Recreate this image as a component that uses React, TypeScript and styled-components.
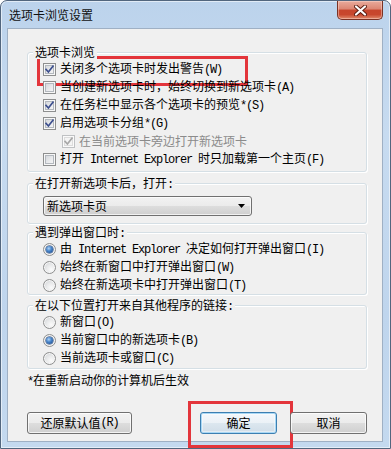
import styled, { createGlobalStyle, css } from "styled-components";

const GlobalStyle = createGlobalStyle`
  html, body {
    margin: 0;
    padding: 0;
    background: #ffffff;
  }
  body {
    font-family: "Noto Sans CJK SC", "Liberation Sans", sans-serif;
    font-size: 12px;
    color: #000;
  }
  * {
    box-sizing: border-box;
  }
`;

const checkOptions = [
  { text: "关闭多个选项卡时发出警告(W)", checked: true, marked: true },
  { text: "当创建新选项卡时，始终切换到新选项卡(A)", checked: false },
  { text: "在任务栏中显示各个选项卡的预览*(S)", checked: true },
  { text: "启用选项卡分组*(G)", checked: true },
  { text: "在当前选项卡旁边打开新选项卡", checked: true, disabled: true, indent: true },
  { text: "打开 Internet Explorer 时只加载第一个主页(F)", checked: false },
];

const popupOptions = [
  { text: "由 Internet Explorer 决定如何打开弹出窗口(I)", checked: true },
  { text: "始终在新窗口中打开弹出窗口(W)", checked: false },
  { text: "始终在新选项卡中打开弹出窗口(T)", checked: false },
];

const linkOptions = [
  { text: "新窗口(O)", checked: false },
  { text: "当前窗口中的新选项卡(B)", checked: true },
  { text: "当前选项卡或窗口(C)", checked: false },
];

// ascii runs get the half-width mono face, like SimSun does
const mix = (text: string) =>
  text
    .split(/([\x20-\x7e]+)/)
    .filter(Boolean)
    .map((part, i) =>
      /^[\x20-\x7e]+$/.test(part) ? <Latin key={i}>{part}</Latin> : <span key={i}>{part}</span>
    );

const CheckMark = ({ color }: { color: string }) => (
  <svg width="9" height="9" viewBox="0 0 9 9">
    <path d="M1 4.4 L3.4 7 L8 1.2" fill="none" stroke={color} strokeWidth="1.7" strokeLinecap="square" />
  </svg>
);

const CloseGlyph = () => (
  <svg width="13" height="11" viewBox="0 0 13 11">
    <path d="M2 1.5 L11 9.5 M11 1.5 L2 9.5" stroke="#5a1c10" strokeWidth="4" strokeLinecap="round" />
    <path d="M2 1.5 L11 9.5 M11 1.5 L2 9.5" stroke="#ffffff" strokeWidth="2.2" strokeLinecap="round" />
  </svg>
);

const ArrowDown = () => (
  <svg width="7" height="4" viewBox="0 0 7 4">
    <path d="M0 0 H7 L3.5 4 Z" fill="#000" />
  </svg>
);

const App = () => {
  return (
    <>
      <GlobalStyle />
      <Window>
        <TitleBar>
          <Title>选项卡浏览设置</Title>
          <CloseButton>
            <CloseGlyph />
          </CloseButton>
        </TitleBar>
        <Client>
          <Group>
            <Caption>选项卡浏览</Caption>
            <Frame $pt={7} $pb={3}>
              {checkOptions.map((opt) => (
                <Row key={opt.text} $indent={opt.indent} $marked={opt.marked} $disabled={opt.disabled}>
                  <CheckBox $disabled={opt.disabled}>
                    {opt.checked && <CheckMark color={opt.disabled ? "#a7a7a7" : "#3d4f8e"} />}
                  </CheckBox>
                  <RowText>{mix(opt.text)}</RowText>
                </Row>
              ))}
            </Frame>
          </Group>

          <Group $mt={4}>
            <Caption>{mix("在打开新选项卡后，打开:")}</Caption>
            <Frame $pt={12} $pb={7}>
              <Dropdown>
                <span>新选项卡页</span>
                <ArrowDown />
              </Dropdown>
            </Frame>
          </Group>

          <Group $mt={1}>
            <Caption>{mix("遇到弹出窗口时:")}</Caption>
            <Frame $pt={7} $pb={0}>
              {popupOptions.map((opt) => (
                <Row key={opt.text}>
                  <Radio $checked={opt.checked} />
                  <RowText>{mix(opt.text)}</RowText>
                </Row>
              ))}
            </Frame>
          </Group>

          <Group $mt={3}>
            <Caption>{mix("在以下位置打开来自其他程序的链接:")}</Caption>
            <Frame $pt={7} $pb={1}>
              {linkOptions.map((opt) => (
                <Row key={opt.text}>
                  <Radio $checked={opt.checked} />
                  <RowText>{mix(opt.text)}</RowText>
                </Row>
              ))}
            </Frame>
          </Group>

          <Note>{mix("*在重新启动你的计算机后生效")}</Note>

          <ButtonRow>
            <Button $w={105}>{mix("还原默认值(R)")}</Button>
            <RightButtons>
              <Button $w={77} $default $marked>
                确定
              </Button>
              <Button $w={77}>取消</Button>
            </RightButtons>
          </ButtonRow>
        </Client>
      </Window>
    </>
  );
};

export default App;

const Window = styled.div`
  width: 391px;
  height: 449px;
  display: flex;
  flex-direction: column;
  padding: 0 7px 6px 6px;
  border: 1px solid #52667e;
  border-radius: 7px 7px 0 0;
  background: linear-gradient(180deg, #bcd3ec 0%, #c7dbf0 30%, #bfd5ed 70%, #c4d9ef 100%);
  box-shadow: inset 0 0 0 1px rgba(255, 255, 255, 0.55);
`;

const TitleBar = styled.div`
  height: 27px;
  flex: none;
  display: flex;
  align-items: center;
  padding-left: 2px;
`;

const Title = styled.span`
  font-size: 12px;
  line-height: 14px;
  color: #111;
  margin-top: 1px;
`;

const CloseButton = styled.div`
  margin-left: auto;
  align-self: flex-start;
  width: 46px;
  height: 19px;
  display: flex;
  align-items: center;
  justify-content: center;
  border: 1px solid #7a3224;
  border-top: none;
  border-radius: 0 0 5px 5px;
  background: linear-gradient(
    180deg,
    #e9ab9c 0%,
    #dc8572 45%,
    #c7452c 50%,
    #c8472d 75%,
    #e08a6b 100%
  );
  box-shadow: inset 0 0 0 1px rgba(255, 220, 210, 0.45);
`;

const Client = styled.div`
  flex: 1;
  display: flex;
  flex-direction: column;
  padding: 16px 15px 7px 19px;
  border: 1px solid #9fb0c4;
  background: #f0f0f0;
`;

const Group = styled.div<{ $mt?: number }>`
  width: 340px;
  display: flex;
  flex-direction: column;
  margin-top: ${({ $mt }) => $mt ?? 0}px;
`;

const Caption = styled.div`
  position: relative;
  z-index: 1;
  align-self: flex-start;
  height: 14px;
  line-height: 14px;
  margin: 0 0 -7px 6px;
  padding: 0 2px;
  background: #f0f0f0;
  white-space: nowrap;
`;

const Frame = styled.div<{ $pt: number; $pb: number }>`
  display: flex;
  flex-direction: column;
  padding: ${({ $pt, $pb }) => `${$pt}px 8px ${$pb}px 15px`};
  border: 1px solid #d5dfe5;
  border-radius: 3px;
  box-shadow: inset 1px 1px 0 #ffffff, 1px 1px 0 #ffffff;
`;

const Row = styled.div<{ $indent?: boolean; $marked?: boolean; $disabled?: boolean }>`
  position: relative;
  height: 18px;
  display: flex;
  align-items: center;
  gap: 4px;
  margin-left: ${({ $indent }) => ($indent ? 19 : 0)}px;
  color: ${({ $disabled }) => ($disabled ? "#8b8b8b" : "#000")};
  white-space: nowrap;

  ${({ $marked }) =>
    $marked &&
    css`
      &::after {
        content: "";
        position: absolute;
        left: -6px;
        top: -4px;
        width: 205px;
        height: 24px;
        border: 3px solid #e3353b;
      }
    `}
`;

const RowText = styled.span`
  line-height: 14px;
`;

const Latin = styled.span`
  font-family: "Liberation Mono", "DejaVu Sans Mono", monospace;
  font-size: 12px;
  letter-spacing: -1.2px;
  white-space: pre;
`;

const CheckBox = styled.span<{ $disabled?: boolean }>`
  width: 13px;
  height: 13px;
  flex: none;
  display: flex;
  align-items: center;
  justify-content: center;
  border: 1px solid ${({ $disabled }) => ($disabled ? "#bfc1c3" : "#8e8f8f")};
  background: ${({ $disabled }) =>
    $disabled ? "#f4f4f4" : "linear-gradient(135deg, #ccd0d5 0%, #e9eaec 55%, #fafafa 100%)"};
  box-shadow: ${({ $disabled }) =>
    $disabled ? "inset 0 0 0 1px #fafafa, inset 0 0 0 2px #dcdcdc" : "inset 0 0 0 1px #f7f7f7, inset 0 0 0 2px #b3b8be"};
`;

const Radio = styled.span<{ $checked?: boolean }>`
  width: 13px;
  height: 13px;
  flex: none;
  border-radius: 50%;
  display: flex;
  align-items: center;
  justify-content: center;
  border: 1px solid #8e8f8f;
  background: radial-gradient(circle at 65% 70%, #fbfbfb 0%, #e8e9ea 45%, #c9ccd0 100%);
  box-shadow: inset 0 0 0 1px #f6f6f6;

  ${({ $checked }) =>
    $checked &&
    css`
      &::after {
        content: "";
        width: 7px;
        height: 7px;
        border-radius: 50%;
        background: radial-gradient(circle at 40% 35%, #b3d4f5 0%, #4b88cc 40%, #1f4f92 85%);
        box-shadow: 0 0 0 0.5px #1b3f73;
      }
    `}
`;

const Dropdown = styled.div`
  width: 209px;
  height: 20px;
  display: flex;
  align-items: center;
  justify-content: space-between;
  padding: 0 6px 0 3px;
  border: 1px solid #707070;
  border-radius: 3px;
  background: linear-gradient(180deg, #f2f2f2 0%, #ebebeb 50%, #dddddd 51%, #cfcfcf 100%);
  box-shadow: inset 0 0 0 1px rgba(255, 255, 255, 0.7);
  line-height: 14px;
`;

const Note = styled.div`
  margin-top: 4px;
  height: 14px;
  line-height: 14px;
  white-space: nowrap;
`;

const ButtonRow = styled.div`
  margin-top: auto;
  width: 340px;
  display: flex;
  align-items: center;
`;

const RightButtons = styled.div`
  margin-left: auto;
  display: flex;
  gap: 13px;
`;

const Button = styled.div<{ $w: number; $default?: boolean; $marked?: boolean }>`
  position: relative;
  width: ${({ $w }) => $w}px;
  height: 22px;
  display: flex;
  align-items: center;
  justify-content: center;
  line-height: 14px;
  white-space: nowrap;
  border: 1px solid ${({ $default }) => ($default ? "#3c7fb1" : "#707070")};
  border-radius: 3px;
  background: ${({ $default }) =>
    $default
      ? "linear-gradient(180deg, #f4f8fb 0%, #ebf1f6 50%, #dce7ef 51%, #d0dde8 100%)"
      : "linear-gradient(180deg, #f2f2f2 0%, #ebebeb 50%, #dddddd 51%, #cfcfcf 100%)"};
  box-shadow: ${({ $default }) =>
    $default ? "inset 0 0 0 1px #a9d8f5, inset 0 0 0 2px rgba(255,255,255,0.4)" : "inset 0 0 0 1px rgba(255, 255, 255, 0.75)"};

  ${({ $marked }) =>
    $marked &&
    css`
      &::after {
        content: "";
        position: absolute;
        left: -13px;
        top: -12px;
        width: 99px;
        height: 41px;
        border: 3px solid #e3353b;
      }
    `}
`;
